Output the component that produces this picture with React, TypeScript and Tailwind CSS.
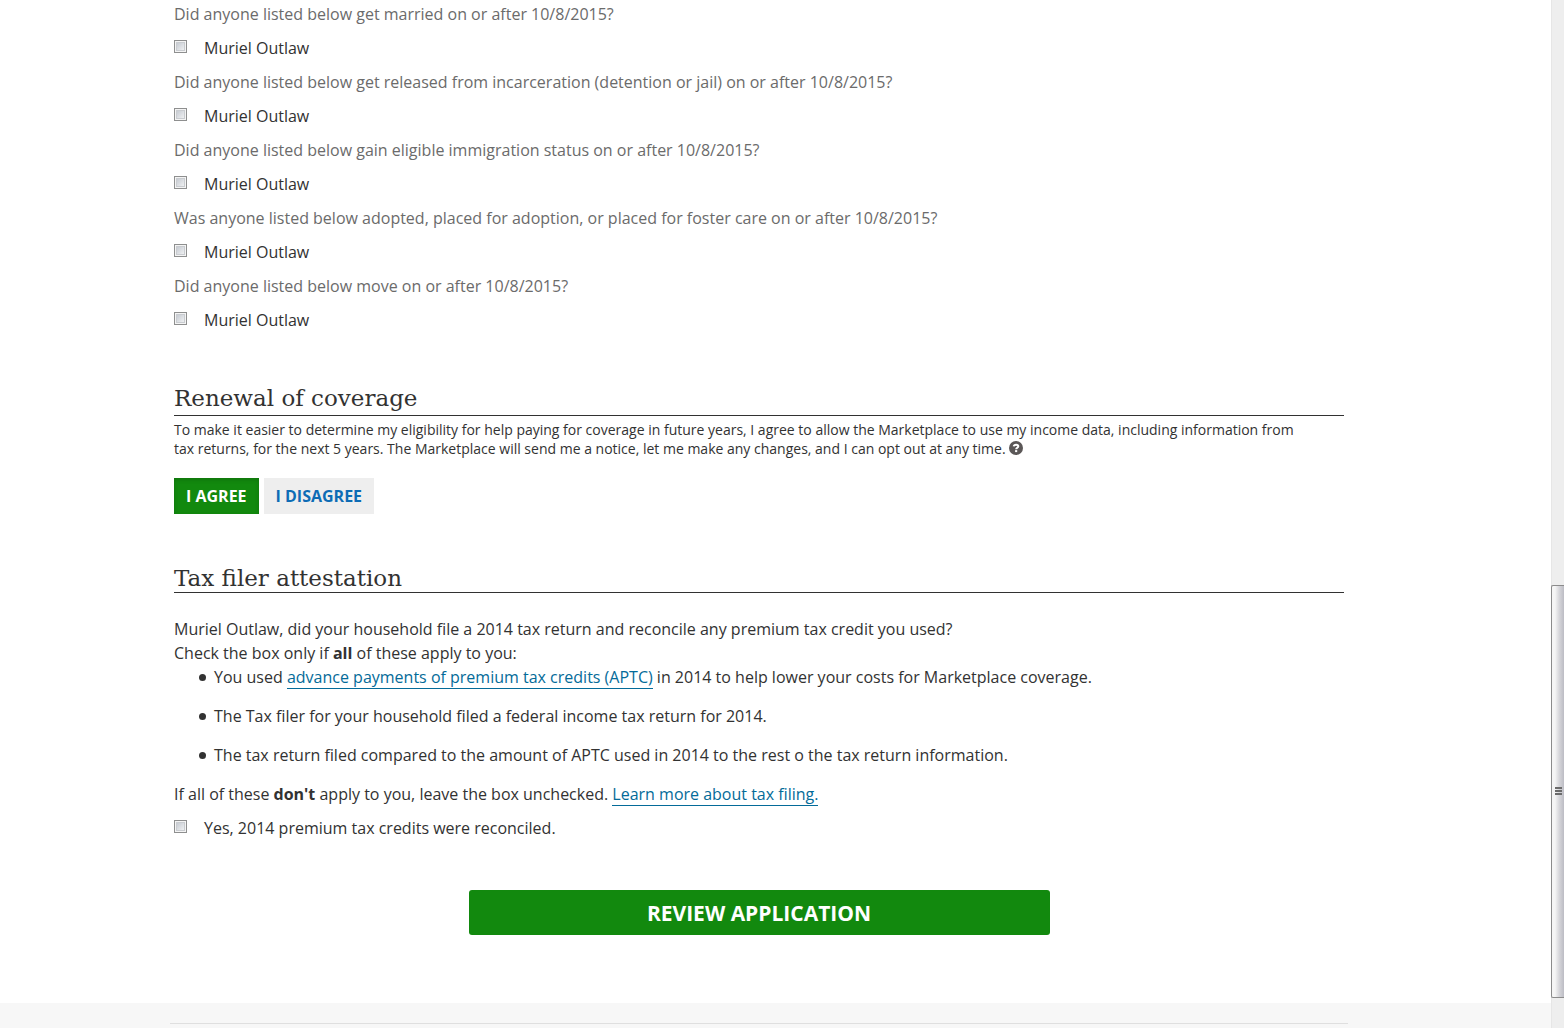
import type { ReactNode } from "react";

const questions = [
  "Did anyone listed below get married on or after 10/8/2015?",
  "Did anyone listed below get released from incarceration (detention or jail) on or after 10/8/2015?",
  "Did anyone listed below gain eligible immigration status on or after 10/8/2015?",
  "Was anyone listed below adopted, placed for adoption, or placed for foster care on or after 10/8/2015?",
  "Did anyone listed below move on or after 10/8/2015?",
];

function CheckRow({ id, children }: { id: string; children: ReactNode }) {
  return (
    <div className="flex items-start">
      <input
        id={id}
        type="checkbox"
        className="mt-1 mr-[17px] size-[13px] shrink-0 appearance-none border border-[#8e8f8f] bg-linear-to-br from-[#bcc2ca] to-[#fafafa] shadow-[inset_0_0_0_1px_#f4f4f4,inset_0_0_0_2px_#c9ccd0] checked:from-[#148a0f] checked:to-[#148a0f]"
      />
      <label htmlFor={id}>{children}</label>
    </div>
  );
}

function Bullet({ children }: { children: ReactNode }) {
  return (
    <li className="flex items-start gap-2 before:mt-[9px] before:size-[7px] before:shrink-0 before:rounded-full before:bg-[#323232]">
      <div>{children}</div>
    </li>
  );
}

function HelpIcon() {
  return (
    <svg viewBox="0 0 14 14" className="size-[14px]" aria-hidden="true">
      <circle cx="7" cy="7" r="7" fill="#5b5757" />
      <path
        d="M4.7 5.4C4.9 4.1 5.8 3.7 7.1 3.7c1.3 0 2.2.6 2.2 1.6 0 1.5-2.1 1.4-2.1 3"
        fill="none"
        stroke="#fff"
        strokeWidth="2"
      />
      <rect x="6.1" y="9.1" width="2.1" height="2" fill="#fff" />
    </svg>
  );
}

function TextLink({ children }: { children: ReactNode }) {
  return (
    <a href="#" className="border-b border-[#046b99] text-[#046b99]">
      {children}
    </a>
  );
}

function Scrollbar() {
  return (
    <div className="flex w-[13px] shrink-0 flex-col bg-[#eeeeee]" aria-hidden="true">
      <div className="grow-[586] basis-0 border-l border-[#e6e6e6]" />
      <div className="flex grow-[412] basis-0 flex-col items-center justify-center gap-px rounded-l-xs border border-r-0 border-[#8b8b8b] bg-linear-to-r from-[#f5f5f5] from-25% via-[#d6d6da] via-60% to-[#bcbcc4]">
        <div className="h-[2px] w-[7px] bg-[#6b6b6b]" />
        <div className="h-[2px] w-[7px] bg-[#6b6b6b]" />
        <div className="h-[2px] w-[7px] bg-[#6b6b6b]" />
      </div>
      <div className="grow-[30] basis-0 border-l border-[#e6e6e6]" />
    </div>
  );
}

export default function App() {
  return (
    <div className="flex min-h-screen bg-white font-['Open_Sans',sans-serif] text-base leading-6 text-[#323232]">
      <div className="flex min-w-0 flex-1 flex-col">
        <main className="pt-[2px] pr-[207px] pb-[68px] pl-[174px]">
          <form className="flex flex-col gap-[10px]">
            {questions.map((question, index) => (
              <fieldset key={question}>
                <legend className="mb-[10px] text-[#6b6b6b]">{question}</legend>
                <CheckRow id={`life-change-${index}`}>Muriel Outlaw</CheckRow>
              </fieldset>
            ))}
          </form>

          <section className="mt-[52px]">
            <h2 className="border-b border-[#323232] pb-[3px] font-['DejaVu_Serif',serif] text-[23px] leading-7">
              Renewal of coverage
            </h2>
            <p className="mt-1 max-w-[1140px] text-sm leading-[19px]">
              To make it easier to determine my eligibility for help paying for coverage in future years, I agree to
              allow the Marketplace to use my income data, including information from tax returns, for the next 5
              years. The Marketplace will send me a notice, let me make any changes, and I can opt out at any time.{" "}
              <button type="button" aria-label="Help" className="inline-block align-[-1px]">
                <HelpIcon />
              </button>
            </p>
            <div className="mt-5 flex gap-[5px] font-bold">
              <button
                type="button"
                className="h-9 bg-[#12890e] px-3 text-white shadow-[inset_0_2px_4px_rgba(0,0,0,0.15)]"
              >
                I AGREE
              </button>
              <button type="button" className="h-9 bg-[#eeeeee] px-3 text-[#0d6cb5]">
                I DISAGREE
              </button>
            </div>
          </section>

          <section className="mt-[50px]">
            <h2 className="border-b border-[#323232] font-['DejaVu_Serif',serif] text-[23px] leading-7">
              Tax filer attestation
            </h2>
            <p className="mt-6">
              Muriel Outlaw, did your household file a 2014 tax return and reconcile any premium tax credit you used?
            </p>
            <p>
              Check the box only if <strong>all</strong> of these apply to you:
            </p>
            <ul className="flex flex-col gap-[15px] pl-[25px]">
              <Bullet>
                You used <TextLink>advance payments of premium tax credits (APTC)</TextLink> in 2014 to help lower
                your costs for Marketplace coverage.
              </Bullet>
              <Bullet>The Tax filer for your household filed a federal income tax return for 2014.</Bullet>
              <Bullet>
                The tax return filed compared to the amount of APTC used in 2014 to the rest o the tax return
                information.
              </Bullet>
            </ul>
            <p className="mt-[15px] mb-[10px]">
              If all of these <strong>don't</strong> apply to you, leave the box unchecked.{" "}
              <TextLink>Learn more about tax filing.</TextLink>
            </p>
            <CheckRow id="reconciled">Yes, 2014 premium tax credits were reconciled.</CheckRow>
          </section>

          <button
            type="submit"
            className="mx-auto mt-[50px] block h-[45px] w-full max-w-[581px] rounded-[3px] bg-[#12890e] text-[21px] font-bold text-white"
          >
            REVIEW APPLICATION
          </button>
        </main>

        <footer className="flex-1 bg-[#f7f7f7] pt-5 pr-[203px] pl-[170px]">
          <hr className="border-[#dfdfdf]" />
        </footer>
      </div>
      <Scrollbar />
    </div>
  );
}
